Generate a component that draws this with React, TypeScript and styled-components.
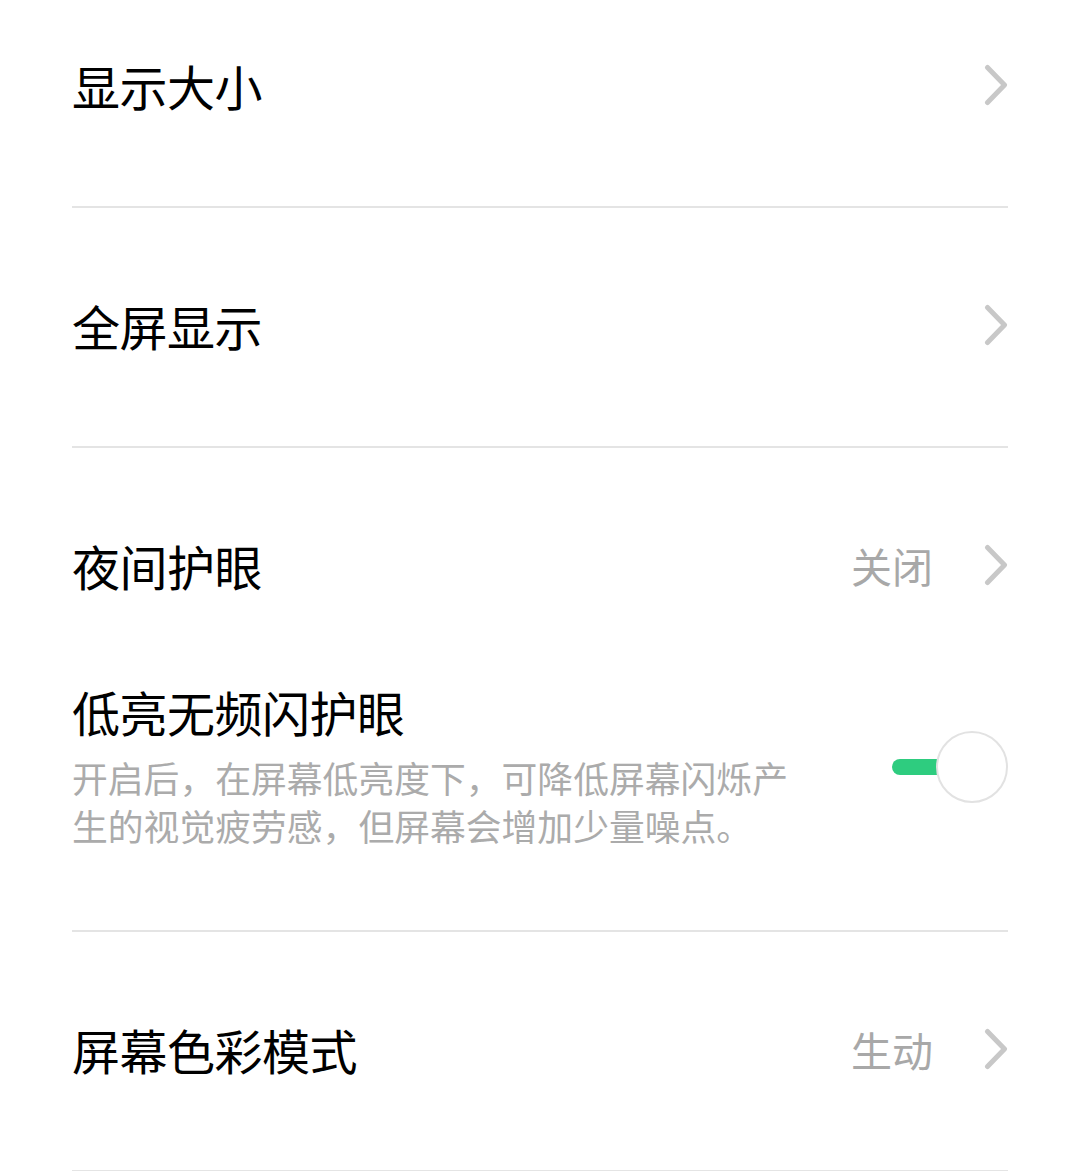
import React from 'react'
import styled, { createGlobalStyle } from 'styled-components'

const GlobalStyle = createGlobalStyle`
	html, body {
		margin: 0;
		padding: 0;
		background: #ffffff;
	}
	body {
		font-family: 'Noto Sans CJK SC', 'Noto Sans', sans-serif;
		-webkit-font-smoothing: antialiased;
	}
`

const List = styled.div`
	margin-top: -32px;
	height: 1203px;
	overflow: hidden;
`

const Item = styled.div`
	margin: 0 72px;
	border-bottom: ${p => (p.$divider ? '2px solid #e4e4e4' : 'none')};
`

const Row = styled.div`
	box-sizing: border-box;
	height: 238px;
	padding-bottom: 4px;
	display: flex;
	align-items: center;
`

const Title = styled.div`
	flex: 1;
	font-size: 48px;
	line-height: 50px;
	color: #000;
	letter-spacing: -0.5px;
`

const Value = styled.span`
	font-size: 41px;
	color: #a8a8a8;
	margin-right: 51px;
`

const ToggleSection = styled.div`
	display: flex;
	align-items: flex-start;
	padding-bottom: 81px;
`

const TextColumn = styled.div`
	flex: 1;
`

const Description = styled.div`
	margin-top: 17px;
	max-width: 730px;
	font-size: 35.8px;
	line-height: 48px;
	color: #ababab;
`

const Switch = styled.div`
	position: relative;
	width: 116px;
	height: 72px;
	margin-top: 45px;
	flex-shrink: 0;
`

const Track = styled.div`
	position: absolute;
	left: 0;
	top: 28px;
	width: 80px;
	height: 16px;
	border-radius: 8px;
	background: #2ecc7f;
`

const Thumb = styled.div`
	position: absolute;
	right: 0;
	top: 0;
	width: 68px;
	height: 68px;
	border-radius: 50%;
	background: #fff;
	border: 2px solid #e2e2e2;
`

function Chevron() {
	return (
		<svg width="24" height="42" viewBox="0 0 24 42">
			<polyline
				points="3.5,3.5 20.5,21 3.5,38.5"
				fill="none"
				stroke="#c8c8c8"
				strokeWidth="5"
				strokeLinecap="round"
				strokeLinejoin="round"
			/>
		</svg>
	)
}

function NavRow({ title, value, divider }: { title: string; value?: string; divider?: boolean }) {
	return (
		<Item $divider={divider}>
			<Row>
				<Title>{title}</Title>
				{value && <Value>{value}</Value>}
				<Chevron />
			</Row>
		</Item>
	)
}

export default function App() {
	return (
		<>
			<GlobalStyle />
			<List>
				<NavRow title="显示大小" divider />
				<NavRow title="全屏显示" divider />
				<NavRow title="夜间护眼" value="关闭" />
				<Item $divider>
					<ToggleSection>
						<TextColumn>
							<Title>低亮无频闪护眼</Title>
							<Description>
								开启后，在屏幕低亮度下，可降低屏幕闪烁产生的视觉疲劳感，但屏幕会增加少量噪点。
							</Description>
						</TextColumn>
						<Switch>
							<Track />
							<Thumb />
						</Switch>
					</ToggleSection>
				</Item>
				<NavRow title="屏幕色彩模式" value="生动" divider />
			</List>
		</>
	)
}
